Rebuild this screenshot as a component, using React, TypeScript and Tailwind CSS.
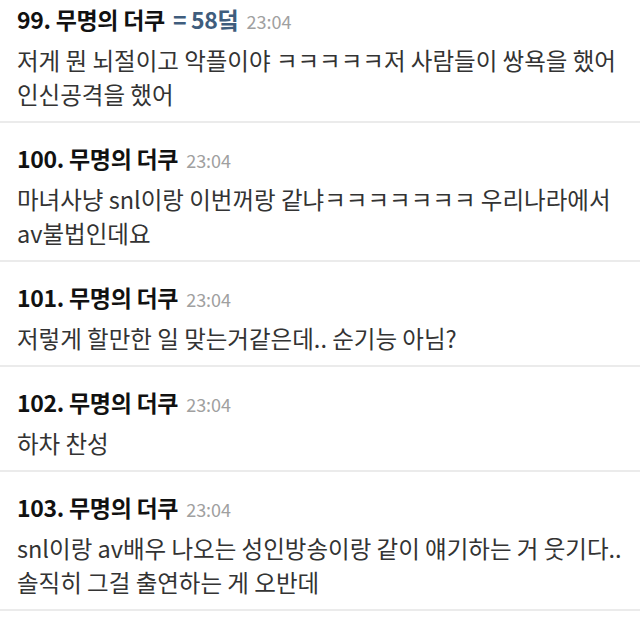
import React from 'react';

// Comment thread data
const comments = [
  {
    no: 99,
    badge: '= 58덬',
    time: '23:04',
    lines: ['저게 뭔 뇌절이고 악플이야 ㅋㅋㅋㅋㅋ저 사람들이 쌍욕을 했어', '인신공격을 했어'],
  },
  {
    no: 100,
    time: '23:04',
    lines: ['마녀사냥 snl이랑 이번꺼랑 같냐ㅋㅋㅋㅋㅋㅋㅋ 우리나라에서', 'av불법인데요'],
  },
  {
    no: 101,
    time: '23:04',
    lines: ['저렇게 할만한 일 맞는거같은데.. 순기능 아님?'],
  },
  {
    no: 102,
    time: '23:04',
    lines: ['하차 찬성'],
  },
  {
    no: 103,
    time: '23:04',
    lines: ['snl이랑 av배우 나오는 성인방송이랑 같이 얘기하는 거 웃기다..', '솔직히 그걸 출연하는 게 오반데'],
  },
];

const App = () => {
  return (
    <div
      className="w-[640px] h-[620px] overflow-hidden bg-white"
      style={{ fontFamily: '"Noto Sans CJK KR", "Noto Sans", sans-serif' }}
    >
      <div className="-mt-[16px]">
        {comments.map(c => (
          <div key={c.no} className="border-b-2 border-[#ebebeb] pl-[17px] pr-2 pt-[21px] pb-[10px]">
            <div className="flex items-baseline h-[28px] leading-[28px] whitespace-nowrap">
              <span className="text-[23px] font-bold text-[#111] tracking-[-0.3px]">
                {c.no}. 무명의 더쿠
              </span>
              {c.badge && (
                <span className="ml-[8px] text-[23px] font-bold text-[#3f5d7d] tracking-[-0.3px]">{c.badge}</span>
              )}
              <span className="ml-[8px] text-[18px] text-[#a0a0a0]">{c.time}</span>
            </div>
            <div className="mt-[10px] text-[23.5px] leading-[34px] text-[#333] whitespace-nowrap">
              {c.lines.map((line, i) => (
                <div key={i}>{line}</div>
              ))}
            </div>
          </div>
        ))}
      </div>
    </div>
  );
};

export default App;
